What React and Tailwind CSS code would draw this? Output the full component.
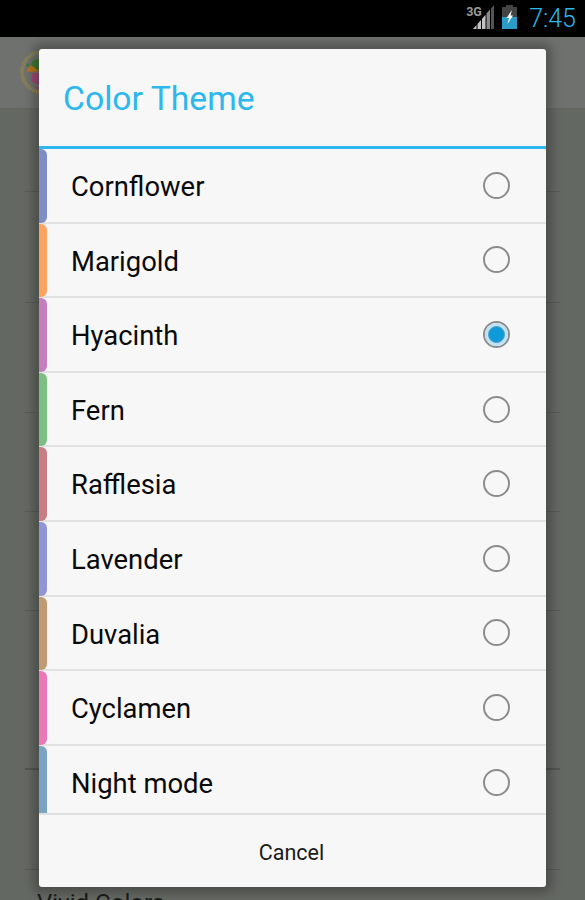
const THEMES = [
  { name: 'Cornflower', color: 'bg-[#7f8cc6]' },
  { name: 'Marigold', color: 'bg-[#fba35f]' },
  { name: 'Hyacinth', color: 'bg-[#c57fbf]', selected: true },
  { name: 'Fern', color: 'bg-[#7cbf83]' },
  { name: 'Rafflesia', color: 'bg-[#c97d84]' },
  { name: 'Lavender', color: 'bg-[#8f95d6]' },
  { name: 'Duvalia', color: 'bg-[#bf9a72]' },
  { name: 'Cyclamen', color: 'bg-[#ec77b6]' },
  { name: 'Night mode', color: 'bg-[#7ba3c4]' },
];

// Row heights of the dimmed settings list behind the dialog
const BACK_ROWS = ['h-[83px]', 'h-[111px]', 'h-[110px]', 'h-[99px]', 'h-[99px]', 'h-[159px]', 'h-[100px]'];

const Radio = ({ selected }) => (
  <span className="w-[27px] h-[27px] rounded-full border-2 border-[#8c8c8c] flex items-center justify-center shrink-0 bg-[#f7f7f7]">
    {selected && (
      <span className="w-[23px] h-[23px] rounded-full bg-[#bfe3f5] flex items-center justify-center">
        <span className="w-[17px] h-[17px] rounded-full bg-[#0f9bd9] border border-[#4f9fc4]" />
      </span>
    )}
  </span>
);

const StatusBar = () => (
  <div className="h-[37px] bg-black flex items-start justify-end shrink-0 pr-[9px] pt-[4px]">
    <div className="relative w-[30px] h-[30px] mr-[6px]">
      <svg className="absolute left-0 top-0" width="30" height="30" viewBox="0 0 30 30">
        <path d="M7 25 L10.5 21 V25 Z" fill="#c4c4c4" />
        <path d="M11.5 25 V19.9 L15 15.9 V25 Z" fill="#c4c4c4" />
        <path d="M16 25 V14.7 L19.5 10.7 V25 Z" fill="#c4c4c4" />
        <path d="M20.5 25 V9.6 L24 5.6 V25 Z" fill="#8a8a8a" />
        <path d="M25 25 V4.4 L28 1 V25 Z" fill="#555555" />
      </svg>
      <span className="absolute left-0 top-[2px] text-[12.5px] leading-[12px] font-bold text-[#9a9a9a] font-['Roboto',sans-serif]">3G</span>
    </div>
    <svg className="mt-[1px] mr-[12px]" width="15" height="24" viewBox="0 0 15 24">
      <rect x="4" y="0" width="7" height="3" fill="#444444" />
      <rect x="0" y="2" width="15" height="10" fill="#444444" />
      <rect x="0" y="12" width="15" height="12" fill="#2b9cc8" />
      <path d="M10 5 L4.5 13 H7 L5.5 19 L11 10.5 H8.5 Z" fill="#ffffff" />
    </svg>
    <span className="text-[25px] leading-[29px] text-[#2db7ec] font-['Roboto',sans-serif] font-light">7:45</span>
  </div>
);

const App = () => {
  return (
    <div className="relative w-[585px] h-[900px] overflow-hidden bg-[#646862] font-['Roboto',sans-serif]">
      <StatusBar />

      {/* Dimmed app behind the dialog */}
      <div className="h-[72px] bg-[#6e716d] border-b border-[#63665f] pl-[20px] flex items-center">
        <svg width="44" height="44" viewBox="0 0 44 44">
          <circle cx="22" cy="21" r="20" fill="none" stroke="#9a8a4a" strokeWidth="4" strokeDasharray="1 1" />
          <path d="M19 20 L10 15 L13 9 L19 8 Z" fill="#3e7a34" />
          <path d="M19 20 L11 21 L6 20 L11 14 Z" fill="#b8771c" />
          <path d="M19 22 L12 22 L11 30 L19 34 Z" fill="#9c4a72" />
          <circle cx="8" cy="14" r="1.5" fill="#3e7a34" />
          <circle cx="17" cy="37" r="1.5" fill="#9c4a72" />
        </svg>
      </div>
      <div className="px-[25px]">
        {BACK_ROWS.map((height, i) => (
          <div key={i} className={`${height} border-b ${i === 5 ? 'border-b-2 border-[#525550]' : 'border-[#585b56]'}`} />
        ))}
        <p className="text-[24px] leading-[28px] text-[#1c1c1c] pl-[12px] pt-[19px]">Vivid Colors</p>
      </div>

      {/* Dialog */}
      <div className="absolute left-[39px] top-[49px] w-[507px] h-[838px] bg-[#f7f7f7] rounded-[3px] flex flex-col overflow-hidden shadow-[0_0_10px_6px_rgba(0,0,0,0.25)]">
        <div className="h-[100px] shrink-0 border-b-[3px] border-[#2db7ec] flex items-center pl-[25px] pt-[3px]">
          <h1 className="text-[33.7px] leading-none text-[#2db7ec] font-normal -ml-[1px]">Color Theme</h1>
        </div>
        <div className="h-[666px] shrink-0 overflow-hidden border-b-2 border-[#e0e0e0]">
          {THEMES.map(theme => (
            <div key={theme.name} className="h-[74.6px] relative flex items-center pl-[32px] pr-[36px] border-b-2 border-[#e2e2e2]">
              <span className={`absolute left-0 top-0 bottom-[-1px] w-[7.5px] rounded-r-[6px] ${theme.color}`} />
              <span className="flex-1 text-[27.4px] leading-none text-[#0a0a0a] pt-[5px]">{theme.name}</span>
              <Radio selected={theme.selected} />
            </div>
          ))}
        </div>
        <div className="flex-1 flex items-center justify-center text-[21.5px] text-[#1a1a1a] pt-[4px] pr-[2px]">Cancel</div>
      </div>
    </div>
  );
};

export default App;
